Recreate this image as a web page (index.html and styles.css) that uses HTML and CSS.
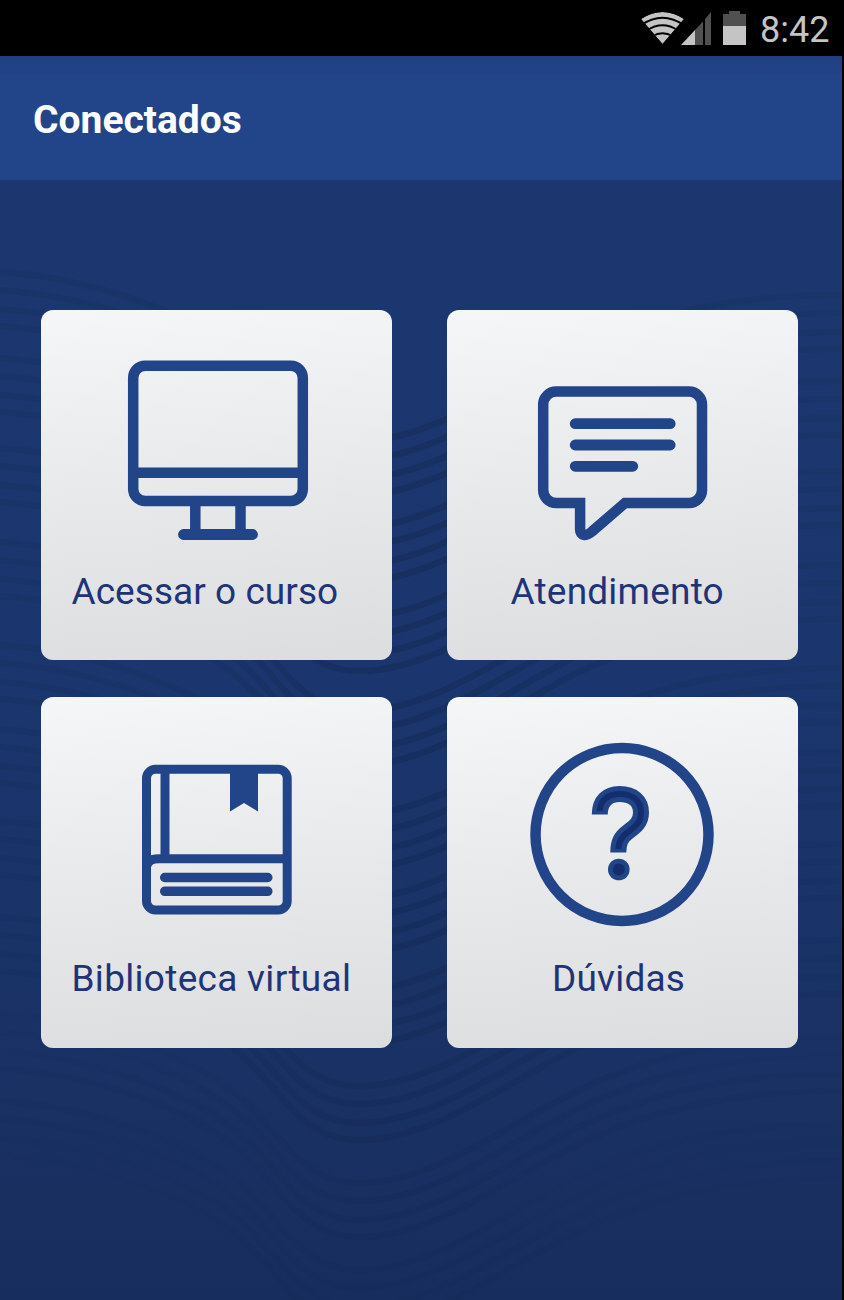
FILE: index.html
```html
<!DOCTYPE html>
<html lang="pt-BR">
<head>
    <meta charset="UTF-8" />
    <meta name="viewport" content="width=device-width, initial-scale=1.0" />
    <title>Conectados</title>
    <link rel="stylesheet" href="styles.css">
</head>
<body>

    <div class="status-bar">
        <svg class="status-icons" width="110" height="36" viewBox="0 0 110 36">
            <!-- wifi -->
            <clipPath id="fan"><path d="M22.5 34 L1 9 Q22.5 -5 44 9 Z" /></clipPath>
            <g clip-path="url(#fan)">
                <path class="lit" d="M22.5 34 L1 9 Q22.5 -5 44 9 Z" />
                <path class="cut" d="M2 14.5 Q22.5 1 43 14.5 M7 20.5 Q22.5 10 38 20.5 M12 26.5 Q22.5 20 33 26.5" />
            </g>
            <!-- signal -->
            <path class="dim" d="M55 20 L63 11.5 V35 H55 Z M65 9 L71 2 V35 H65 Z" />
            <path class="lit" d="M41 35 L55 20 V35 Z" />
            <!-- battery -->
            <path class="dim" d="M83 4 H89 V1 H100 V4 H106 V16 H83 Z" />
            <path class="lit" d="M83 16 H106 V35 H83 Z" />
        </svg>
        <span class="clock">8:42</span>
    </div>

    <header class="app-bar">
        <h1>Conectados</h1>
    </header>

    <main class="home">
        <svg class="waves" width="842" height="1120" viewBox="0 180 842 1120">
            <defs>
                <linearGradient id="fade">
                    <stop offset="0" stop-color="#10284f" stop-opacity="0.2" />
                    <stop offset="0.25" stop-color="#10284f" stop-opacity="0.18" />
                    <stop offset="0.42" stop-color="#10244c" stop-opacity="0.38" />
                    <stop offset="0.55" stop-color="#10244c" stop-opacity="0.38" />
                    <stop offset="0.85" stop-color="#10284f" stop-opacity="0.18" />
                    <stop offset="1" stop-color="#10284f" stop-opacity="0.16" />
                </linearGradient>
                <path id="wave" d="M0 272 C90 278 190 312 240 355 C285 394 300 441 360 441 C430 441 500 388 575 350 C660 308 750 295 842 295" />
                <g id="group">
                    <use href="#wave" />
                    <use href="#wave" y="18" />
                    <use href="#wave" y="37" />
                    <use href="#wave" y="54" />
                </g>
            </defs>
            <use href="#group" />
            <use href="#group" y="86" />
            <use href="#group" y="176" />
            <use href="#group" y="270" />
            <use href="#group" y="373" opacity="0.85" />
            <use href="#group" y="457" opacity="0.8" />
            <use href="#group" y="549" opacity="0.7" />
            <use href="#group" y="645" opacity="0.65" />
            <use href="#group" y="742" opacity="0.4" />
            <use href="#group" y="829" opacity="0.3" />
        </svg>

        <div class="menu">
            <a class="card course">
                <svg class="icon" width="351" height="250" viewBox="0.5 0 351 250">
                    <rect x="92.7" y="55.7" width="169.6" height="135.3" rx="12" />
                    <path d="M92 162.8 H262 M154.8 191 V222 M200 191 V222" />
                    <path class="round" d="M143 224.5 H212" />
                </svg>
                <span class="label">Acessar o curso</span>
            </a>

            <a class="card support">
                <svg class="icon" width="351" height="250" viewBox="0.5 0 351 250">
                    <path d="M138.8 193 H109.7 a13 13 0 0 1 -13 -13 V94.6 a13 13 0 0 1 13 -13 H242.5 a13 13 0 0 1 13 13 V180 a13 13 0 0 1 -13 13 H178.5 L145.5 221.5 C139.5 227 133.6 225.5 133.6 219.5 V190" />
                    <path class="round" d="M128.7 113.7 H223.7 M128.7 135 H223.7 M128.7 156.3 H186.3" />
                </svg>
                <span class="label">Atendimento</span>
            </a>

            <a class="card library">
                <svg class="icon thin" width="351" height="250" viewBox="0.5 0 351 250">
                    <rect x="106" y="72.3" width="140.7" height="140.7" rx="9" />
                    <path d="M124.5 72 V161 M246 161.7 H118 Q107 161.7 106 170" />
                    <path class="round" d="M124.2 180.5 H227.3 M124.2 194.3 H227.3" />
                    <path class="solid" d="M102 160 H110 V168 H102 Z M189.5 74 H217.5 V114.5 L203.5 106 L189.5 114.5 Z" />
                </svg>
                <span class="label">Biblioteca virtual</span>
            </a>

            <a class="card faq">
                <svg class="icon" width="351" height="250" viewBox="0.5 0 351 250">
                    <circle cx="175.5" cy="137.5" r="86.5" />
                    <path class="mark" d="M153.3 117.5 C153.3 104 161 97 173 97 C186.5 97 194.5 104 194.5 115.5 C194.5 125 189 129.5 182 134.5 C174.5 140 171.8 145 171.8 155.5" />
                    <path class="mark-inner" d="M153.3 114 C153.3 104 161 97 173 97 C186.5 97 194.5 104 194.5 115.5 C194.5 125 189 129.5 182 134.5 C174.5 140 171.8 145 171.8 152" />
                    <circle class="solid" cx="172.3" cy="172.5" r="10.8" />
                    <circle class="dot-inner" cx="172.3" cy="172.5" r="6" />
                </svg>
                <span class="label">Dúvidas</span>
            </a>
        </div>
    </main>

</body>
</html>
```
FILE: styles.css
```css
body {
    margin: 0;
    padding-right: 2px;
    box-sizing: border-box;
    width: 844px;
    height: 1300px;
    overflow: hidden;
    background-color: #000;
    font-family: Roboto, "Liberation Sans", sans-serif;
}

.status-bar {
    height: 56px;
    display: flex;
    justify-content: flex-end;
    align-items: center;
    box-sizing: border-box;
    padding-right: 12.5px;
    background-color: #000;
}

.status-icons {
    margin-right: 10px;
}

.lit {
    fill: #c4c4c4;
}

.dim {
    fill: #505050;
}

.cut {
    fill: none;
    stroke: #000;
    stroke-width: 1.8;
}

.clock {
    color: #c4c4c4;
    font-size: 36px;
    line-height: 56px;
    padding-top: 3px;
}

.app-bar {
    height: 124px;
    display: flex;
    align-items: center;
    padding-left: 33px;
    background: linear-gradient(#203f80, #224488 20px);
}

.app-bar h1 {
    margin: 0;
    padding-top: 4px;
    color: #fff;
    font-size: 39px;
    font-weight: bold;
    line-height: 46px;
}

.home {
    position: relative;
    height: 1120px;
    box-sizing: border-box;
    padding: 130px 0 0 40.5px;
    background: linear-gradient(#1c376f, #1b366e 45%, #193163 82%, #172d5d);
}

/* wave lines behind the cards */
.waves {
    position: absolute;
    top: 0;
    left: 0;
    fill: none;
    stroke: url(#fade);
    stroke-width: 6.5;
}

.menu {
    position: relative;
    display: grid;
    grid-template-columns: 351px 351px;
    grid-template-rows: 350px 351px;
    column-gap: 55px;
    row-gap: 36.5px;
}

.card {
    display: flex;
    flex-direction: column;
    border-radius: 12px;
    background: linear-gradient(175deg, #f5f6f8, #e9eaec 45%, #dcdddf);
}

.icon {
    fill: none;
    stroke: #224488;
    stroke-width: 10.5;
}

.icon.thin {
    stroke-width: 9;
}

.icon .round {
    stroke-linecap: round;
    stroke-width: 10.8;
}

.icon.thin .round {
    stroke-width: 9.5;
}

.icon .solid {
    fill: #224488;
    stroke: none;
}

.icon .mark {
    stroke-width: 16;
}

.icon .mark-inner {
    stroke: #142d6c;
    stroke-width: 6;
}

.icon .dot-inner {
    fill: #142d6c;
    stroke: none;
}

.label {
    color: #1f3478;
    font-size: 37px;
    line-height: 44px;
    margin-top: 10px;
    white-space: nowrap;
}

.course .label {
    padding-left: 31px;
    letter-spacing: 0.05px;
}

.support .label {
    padding-left: 64px;
    letter-spacing: 0.2px;
}

.library .label {
    padding-left: 31px;
    letter-spacing: 0.3px;
}

.faq .label {
    padding-left: 105.5px;
    letter-spacing: 0.2px;
}
```
